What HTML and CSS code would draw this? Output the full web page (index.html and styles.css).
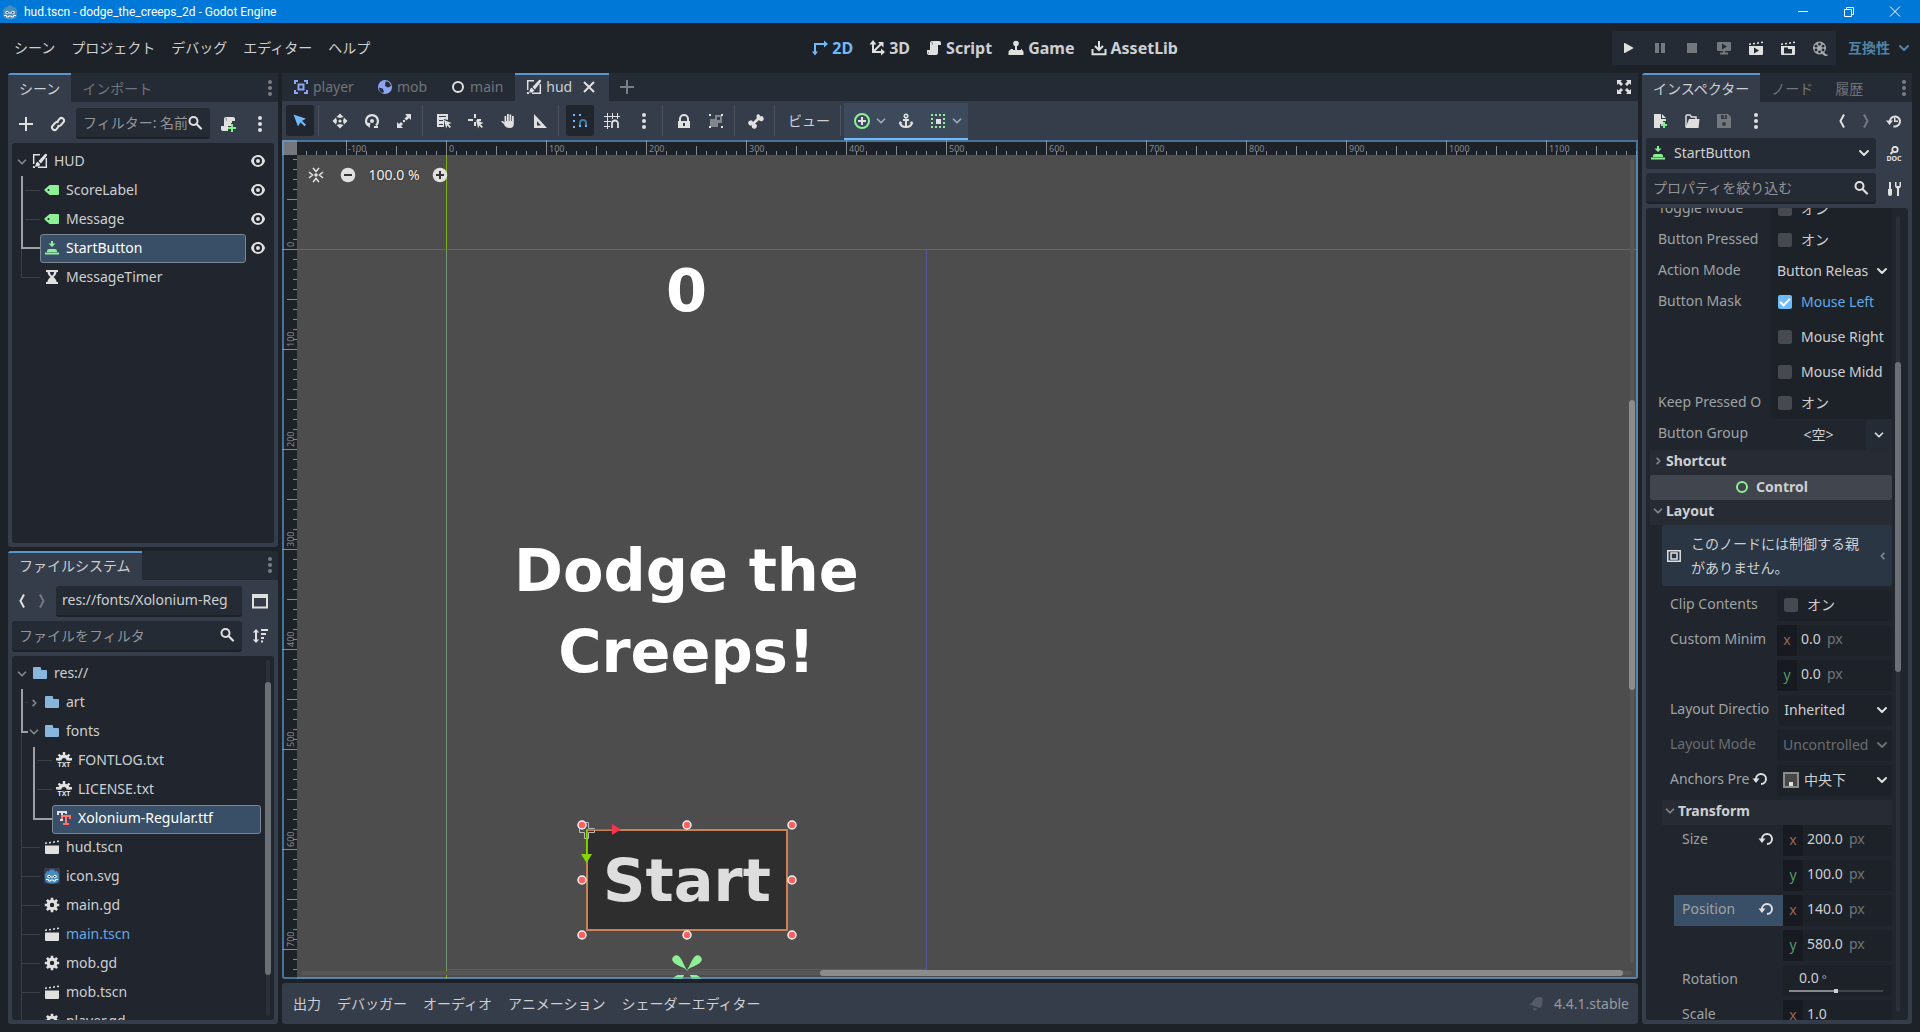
FILE: index.html
```
<!DOCTYPE html>
<html lang="ja">
<head>
    <meta charset="utf-8">
    <title>hud.tscn - dodge_the_creeps_2d - Godot Engine</title>
    <link rel="stylesheet" href="styles.css">
</head>
<body>

<!-- icon set, all on a 16x16 grid -->
<svg class="sprite" aria-hidden="true">
    <symbol id="godot" viewBox="0 0 16 16"><path fill="#478cbf" d="M2 5l1-2 2 .5L6 1.500h4l1 2 2-.5 1 2 1 1v5c0 3-3 4.500-7 4.500S1 14 1 11V6z"/><circle cx="5" cy="8.500" r="1.700" fill="#fff"/><circle cx="11" cy="8.500" r="1.700" fill="#fff"/><circle cx="5.200" cy="8.600" r=".9" fill="#414042"/><circle cx="10.800" cy="8.600" r=".9" fill="#414042"/><path stroke="#fff" d="M8 8v2M2 11.500h2.500v1.500h2v-1h3v1h2v-1.500H14" fill="none"/></symbol>
    <symbol id="plus" viewBox="0 0 16 16"><path d="M7 1v6H1v2h6v6h2V9h6V7H9V1z"/></symbol>
    <symbol id="link" viewBox="0 0 16 16"><g fill="none" stroke="currentColor" stroke-width="2"><path d="M7 6l2.500-3.200a2.500 2.500 0 0 1 3.700 3.700L10.500 9.500a2.500 2.500 0 0 1-3 0"/><path d="M9 10l-2.500 3.200a2.500 2.500 0 0 1-3.700-3.700L5.500 6.500a2.500 2.500 0 0 1 3 0"/></g></symbol>
    <symbol id="search" viewBox="0 0 16 16"><circle cx="6.500" cy="6" r="4" fill="none" stroke="currentColor" stroke-width="2"/><path stroke="currentColor" stroke-width="2.200" stroke-linecap="round" d="M9.500 9l4.500 4.500"/></symbol>
    <symbol id="script" viewBox="0 0 16 16"><path d="M6 1c-1.100 0-2 .9-2 2v7H1v3c0 1.100.9 2 2 2h7c1.100 0 2-.9 2-2V5h3V3c0-1.100-.9-2-2-2z"/><path fill="#9a9a9a" d="M5 3a1 1 0 0 1 2 0v2H6V3.500zM2 12h1v2a1 1 0 0 1-1-1z"/></symbol>
    <symbol id="script-add" viewBox="0 0 16 16"><path d="M6 1c-1.100 0-2 .9-2 2v7H1v3c0 1.100.9 2 2 2h5v-5h3V7h1V5h3V3c0-1.100-.9-2-2-2z"/><path fill="#9a9a9a" d="M5 3a1 1 0 0 1 2 0v2H6V3.500z"/><path fill="#7ff289" d="M11 8h2v3h3v2h-3v3h-2v-3H8v-2h3z"/></symbol>
    <symbol id="dots" viewBox="0 0 16 16"><circle cx="8" cy="2" r="2"/><circle cx="8" cy="8" r="2"/><circle cx="8" cy="14" r="2"/></symbol>
    <symbol id="down" viewBox="0 0 16 16"><path fill="none" stroke="currentColor" stroke-width="2" stroke-linecap="round" stroke-linejoin="round" d="M4 6l4 4 4-4"/></symbol>
    <symbol id="right" viewBox="0 0 16 16"><path fill="none" stroke="currentColor" stroke-width="2" stroke-linecap="round" stroke-linejoin="round" d="M7 5l3 3-3 3"/></symbol>
    <symbol id="back" viewBox="0 0 16 16"><path fill="none" stroke="currentColor" stroke-width="2" d="M10 1.500L6.500 8l3.500 6.500"/></symbol>
    <symbol id="forward" viewBox="0 0 16 16"><path fill="none" stroke="currentColor" stroke-width="2" d="M6 1.500L9.500 8 6 14.500"/></symbol>
    <symbol id="layer" viewBox="0 0 16 16"><path fill="none" stroke="currentColor" stroke-width="1.500" d="M8 1.700H1.700V11M14.300 5v9.300H6M1.700 13v1.300H3M13 1.700h1.300"/><path d="M14.500 1c.8.8.5 1.500 0 2.300L9 10.500 6.500 8 12.500 1.500c.7-.7 1.300-1 2-.5zM5.800 8.800l2.400 2.400c-.5 2-2.200 2.600-5.200 2.300C4 12 3.500 9.500 5.800 8.800z"/></symbol>
    <symbol id="label" viewBox="0 0 16 16"><path fill-rule="evenodd" d="M6 3a1 1 0 0 0-.7.300l-4.600 4a1 1 0 0 0 0 1.400l4.600 4a1 1 0 0 0 .7.300h8a1 1 0 0 0 1-1V4a1 1 0 0 0-1-1zM4.500 7a1 1 0 0 1 0 2 1 1 0 0 1 0-2z"/></symbol>
    <symbol id="button" viewBox="0 0 16 16"><path d="M7 1v2.500H4.500L8 7l3.500-3.500H9V1zM5 9a2 2 0 0 0-2 2v1h10v-1a2 2 0 0 0-2-2zM1 12.500v2h14v-2z"/></symbol>
    <symbol id="timer" viewBox="0 0 16 16"><path fill-rule="evenodd" d="M2 1v2h1.500c0 2 1.500 4 3 5-1.500 1-3 3-3 5H2v2h12v-2h-1.500c0-2-1.500-4-3-5 1.500-1 3-3 3-5H14V1zm4 2h4c0 1.500-.7 3-2 3.800C6.700 6 6 4.500 6 3z"/></symbol>
    <symbol id="eye" viewBox="0 0 16 16"><path fill-rule="evenodd" d="M8 2C5.400 2 2.200 3.900 1 7.700a1 1 0 0 0 0 .6C2.200 12.200 5.500 14 8 14s5.800-1.800 7-5.700a1 1 0 0 0 0-.6C13.900 3.900 10.600 2 8 2zm0 2a4 4 0 0 1 0 8 4 4 0 0 1 0-8zm0 2a2 2 0 0 0 0 4 2 2 0 0 0 0-4z"/></symbol>
    <symbol id="folder" viewBox="0 0 16 16"><path d="M2 2a1 1 0 0 0-1 1v10a1 1 0 0 0 1 1h12a1 1 0 0 0 1-1V6a1 1 0 0 0-1-1h-4a1 1 0 0 1-1-1V3a1 1 0 0 0-1-1z"/></symbol>
    <symbol id="clapper" viewBox="0 0 16 16"><path d="M1 6.500V14a1 1 0 0 0 1 1h12a1 1 0 0 0 1-1V6.500zM1 3.500l2-.3v1.500L1 5zM5 3l2-.3v1.500L5 4.500zM9 2.400l2-.3v1.500L9 4zM13 1.800l2-.3V3l-2 .3z"/></symbol>
    <symbol id="gear" viewBox="0 0 16 16"><circle cx="8" cy="8" r="3.800" fill="none" stroke="currentColor" stroke-width="3.200"/><path stroke="currentColor" stroke-width="2.600" d="M8 .8v3M8 12.200v3M.8 8h3M12.200 8h3M2.900 2.900L5 5M11 11l2.100 2.100M2.900 13.100L5 11M11 5l2.100-2.100"/></symbol>
    <symbol id="txt" viewBox="0 0 16 16"><path d="M2 8.500a6 6 0 0 1 12 0h-3.500a2.500 2.500 0 0 0-5 0z"/><path stroke="currentColor" stroke-width="2.400" d="M8 0v4M2.500 2.500L5 5M13.500 2.500L11 5M0 7.300h4M12 7.300h4"/><text x="8" y="15" text-anchor="middle" class="mini">TXT</text></symbol>
    <symbol id="font" viewBox="0 0 16 16"><path d="M1 1v4h2V3h2v6H4v2h3V3h2v1h2V1z"/><path fill="#ff7070" d="M5 5v4h2V7h2v6H7v2h6v-2h-2V7h2v2h2V5z"/></symbol>
    <symbol id="window" viewBox="0 0 16 16"><path fill="none" stroke="currentColor" stroke-width="2" d="M1 2h14v12.500H1z"/><path d="M0 1h16v4H0z"/></symbol>
    <symbol id="sort" viewBox="0 0 16 16"><path d="M4 1L.8 4.500H3v7H.8L4 15l3.200-3.500H5v-7h2.200zM9 1h7v2H9zM9 5h5v2H9zM9 9h3v2H9zM9 12.500h2v2H9z"/></symbol>
    <symbol id="mode2d" viewBox="0 0 16 16"><path fill="none" stroke="currentColor" stroke-width="2" d="M3 12V4h9"/><path d="M12 .5L16 4l-4 3.500zM0 11.500h6L3 15.500z"/></symbol>
    <symbol id="mode3d" viewBox="0 0 16 16"><path fill="none" stroke="currentColor" stroke-width="2" d="M4 3v9h9M4 12l8-8"/><path d="M4 0L.5 4.500h7zM12 8.500v7l4-3.500zM9 2h5.500v5.500z"/></symbol>
    <symbol id="game" viewBox="0 0 16 16"><circle cx="8" cy="3.500" r="2.800"/><path d="M7 5h2v5h4V9h1v1a2 2 0 0 1 1.500 2v3H.5v-3a2 2 0 0 1 2-2V9H5v1h2z"/></symbol>
    <symbol id="asset" viewBox="0 0 16 16"><path fill="none" stroke="currentColor" stroke-width="2" d="M1.500 9v5.200h13V9M8 1v8M4 6l4 4 4-4"/></symbol>
    <symbol id="play" viewBox="0 0 16 16"><path d="M4 12.500a.5.500 0 0 0 .8.400L13 8.400a.5.500 0 0 0 0-.8L4.800 3a.5.500 0 0 0-.8.500z"/></symbol>
    <symbol id="pause" viewBox="0 0 16 16"><path d="M3 3h4v10H3zM9 3h4v10H9z"/></symbol>
    <symbol id="stop" viewBox="0 0 16 16"><path d="M3 3h10v10H3z"/></symbol>
    <symbol id="remote" viewBox="0 0 16 16"><path fill-rule="evenodd" d="M1 3a1 1 0 0 1 1-1h12a1 1 0 0 1 1 1v7a1 1 0 0 1-1 1H2a1 1 0 0 1-1-1zm5 .5v6L11 6.500zM7 11h2v1.500h3v2H4v-2h3z"/></symbol>
    <symbol id="play-scene" viewBox="0 0 16 16"><path fill-rule="evenodd" d="M1 6v8a1 1 0 0 0 1 1h12a1 1 0 0 0 1-1V6zm5 1.500L11 10.500l-5 3zM1 3.500l2-.3v1.500L1 5zM5 3l2-.3v1.500L5 4.500zM9 2.400l2-.3v1.500L9 4zM13 1.800l2-.3V3l-2 .3z"/></symbol>
    <symbol id="play-custom" viewBox="0 0 16 16"><path fill-rule="evenodd" d="M1 6v8a1 1 0 0 0 1 1h12a1 1 0 0 0 1-1V6zm3 1.500h4V9h4v4.500H4zM1 3.500l2-.3v1.500L1 5zM5 3l2-.3v1.500L5 4.500zM9 2.400l2-.3v1.500L9 4zM13 1.800l2-.3V3l-2 .3z"/></symbol>
    <symbol id="movie" viewBox="0 0 16 16"><circle cx="7.500" cy="8" r="6.500"/><path d="M12 12l2 2.500h1.500V16H13l-3-2z"/><g fill="#252b34"><circle cx="7.500" cy="4.200" r="1.400"/><circle cx="7.500" cy="11.800" r="1.400"/><circle cx="4" cy="6.200" r="1.400"/><circle cx="11" cy="6.200" r="1.400"/><circle cx="4" cy="10" r="1.400"/><circle cx="11" cy="10" r="1.400"/></g></symbol>
    <symbol id="area" viewBox="0 0 16 16"><path fill="none" stroke="currentColor" stroke-width="2" d="M2 5V2h3M11 2h3v3M14 11v3h-3M5 14H2v-3M5.500 5.500h5v5h-5z"/></symbol>
    <symbol id="body" viewBox="0 0 16 16"><circle cx="8" cy="8" r="7"/><path fill="#252b34" d="M8.500 2.500c2.500-.5 5 1.500 5.500 4.500l-3 1.500L8 7zM2 8.500l3.500 1 1.500 3-1 1.300C4 14 2 12 2 8.500z"/></symbol>
    <symbol id="ring" viewBox="0 0 16 16"><circle cx="8" cy="8" r="5" fill="none" stroke="currentColor" stroke-width="2"/></symbol>
    <symbol id="close" viewBox="0 0 16 16"><path fill="none" stroke="currentColor" stroke-width="2" d="M3 3l10 10M13 3L3 13"/></symbol>
    <symbol id="expand" viewBox="0 0 16 16"><path d="M1 1h5L4.500 2.500 7 5 5 7 2.500 4.500 1 6zM15 1v5l-1.500-1.500L11 7 9 5l2.500-2.500L10 1zM1 15v-5l1.500 1.500L5 9l2 2-2.500 2.500L6 15zM15 15h-5l1.500-1.500L9 11l2-2 2.500 2.500L15 10z"/></symbol>
    <symbol id="select" viewBox="0 0 16 16"><path d="M1.500 1.500l4.500 12 2.500-4.200 4 4 1.500-1.500-4-4 4-2z"/></symbol>
    <symbol id="move" viewBox="0 0 16 16"><path d="M8 .5L4.500 4 8 5l3.500-1zM8 15.500L4.500 12 8 11l3.500 1zM.5 8L4 4.500 5 8l-1 3.500zM15.500 8L12 4.500 11 8l1 3.500z"/><circle cx="8" cy="8" r="1.600"/></symbol>
    <symbol id="rotate" viewBox="0 0 16 16"><path fill="none" stroke="currentColor" stroke-width="2.200" d="M4 12.500a6 6 0 1 1 8 0"/><path d="M1 9.500l5.500.5-1 5zM10 13h4v2h-4z"/><circle cx="8" cy="8" r="2"/></symbol>
    <symbol id="scale" viewBox="0 0 16 16"><path d="M9 1h6v6l-2-2-2.500 2.500-2-2L11 3zM1 15V9l2 2 2-2 2 2-2 2 2 2z"/><circle cx="8" cy="8" r="1.200"/></symbol>
    <symbol id="list" viewBox="0 0 16 16"><path fill-rule="evenodd" d="M1 1h11v6L8 6v8H1zm2 2v1h7V3zm0 4v1h4V7zm0 4v1h4v-1z"/><path d="M8 7l7.500 3-3 1.200 2.500 2.500-1.300 1.300-2.500-2.500-1 3z"/></symbol>
    <symbol id="pivot" viewBox="0 0 16 16"><path d="M6 1h2v4H6zM6 9h2v4H6zM0 6h5v2H0zM9 6h4v2H9z"/><path d="M8 7l7.500 3-3 1.200 2.500 2.500-1.300 1.300-2.500-2.500-1 3z"/></symbol>
    <symbol id="pan" viewBox="0 0 16 16"><path d="M4.500 3h1.800v5H7V1h1.800v7h.7V1.500h1.800V8h.7V3h1.800v8c0 2.500-1.500 4-4 4-3 0-4.500-1-6-4L1 8.500c1-1 2.500-.5 3.500 1z"/></symbol>
    <symbol id="ruler" viewBox="0 0 16 16"><path fill-rule="evenodd" d="M2 1v14h13zm3 7l4 4.500H5z"/></symbol>
    <symbol id="snap" viewBox="0 0 16 16"><path d="M1 1h2v2H1zM7 1h2v2H7zM1 7h2v2H1zM1 13h2v2H1z"/><path fill="none" stroke="#3f7aa5" stroke-width="2" d="M8 12v-2a3 3 0 0 1 6 0v2"/><path d="M7 12h2v2H7zM13 12h2v2h-2z"/></symbol>
    <symbol id="grid" viewBox="0 0 16 16"><path d="M3 0h1v16H3zM8 0h1v6H8zM13 0h1v6h-1zM0 3h16v1H0zM0 8h7v1H0zM0 13h6v1H0z"/><path fill="none" stroke="currentColor" stroke-width="1.800" d="M8 15v-4.500a3 3 0 0 1 6 0V15"/></symbol>
    <symbol id="lock" viewBox="0 0 16 16"><path fill-rule="evenodd" d="M8 1a5 5 0 0 0-5 5v2H2v7h12V8h-1V6a5 5 0 0 0-5-5zm0 2a3 3 0 0 1 3 3v2H5V6a3 3 0 0 1 3-3zM7 10h2v3H7z"/></symbol>
    <symbol id="group" viewBox="0 0 16 16"><path opacity=".45" fill-rule="evenodd" d="M7 2h7v8h-4v4H2V6h5zm2 2v3h3V4z"/><path d="M1 1h2v2H1zM13 1h2v2h-2zM1 13h2v2H1zM13 13h2v2h-2z"/></symbol>
    <symbol id="bone" viewBox="0 0 16 16"><path d="M10.500 1A2.500 2.500 0 0 0 9 5L5 9a2.500 2.500 0 1 0-.8 3A2.500 2.500 0 1 0 7 10.800L11 7a2.500 2.500 0 1 0 1-3.500A2.500 2.500 0 0 0 10.500 1z"/></symbol>
    <symbol id="control-plus" viewBox="0 0 16 16"><circle cx="8" cy="8" r="7" fill="none" stroke="#8eef97" stroke-width="2"/><path d="M7 4h2v3h3v2H9v3H7V9H4V7h3z"/></symbol>
    <symbol id="anchor" viewBox="0 0 16 16"><path fill="none" stroke="currentColor" stroke-width="2" d="M8 5.500V14M5 7h6M2 9.500C2.500 13 5 14 8 14s5.500-1 6-4.500"/><circle cx="8" cy="3" r="1.700" fill="none" stroke="currentColor" stroke-width="1.600"/><path d="M.5 11l1.500-3 2.500 2zM15.500 11L14 8l-2.500 2z"/></symbol>
    <symbol id="container" viewBox="0 0 16 16"><path fill="none" stroke="#8eef97" stroke-width="2" stroke-dasharray="2 2" d="M1 2h14M1 14h14M2 5v8M14 5v8"/><path d="M6 6h5v5H6z"/></symbol>
    <symbol id="file-new" viewBox="0 0 16 16"><path d="M2 1v14h6v-4h3V8h3V6H9V1zM10 1v4h4z"/><path fill="#7ff289" d="M11 9h2v2h2v2h-2v2h-2v-2H9v-2h2z"/></symbol>
    <symbol id="open" viewBox="0 0 16 16"><path fill="none" stroke="currentColor" stroke-width="1.500" d="M2 14V3a1 1 0 0 1 1-1h3l1.500 2H12v3"/><path d="M5 6h10.500l-1 9H1.500z"/></symbol>
    <symbol id="save" viewBox="0 0 16 16"><path fill-rule="evenodd" d="M1 1h11l3 3v11H1zm4 1v4h6V2H9v3H8V2zm3 7a2 2 0 0 0 0 4 2 2 0 0 0 0-4z"/></symbol>
    <symbol id="history" viewBox="0 0 16 16"><path fill="none" stroke="currentColor" stroke-width="2" d="M4 8.500a5 5 0 1 1 3.500 4.700"/><path d="M0 7.500h7L3.500 12zM8 4.500h1.500v3H12V9H8z"/></symbol>
    <symbol id="doc" viewBox="0 0 16 16"><circle cx="9" cy="3.500" r="2.700" fill="none" stroke="currentColor" stroke-width="1.800"/><path stroke="currentColor" stroke-width="2" d="M7 5.500L4.500 8"/><text x="8" y="15" text-anchor="middle" class="mini">DOC</text></symbol>
    <symbol id="tools" viewBox="0 0 16 16"><path d="M3 1h2v7h1v5a2 2 0 0 1-4 0V8h1zM9 1v4a3 3 0 0 0 2 2.500V15h2V7.500A3 3 0 0 0 15 5V1h-1.500v4h-3V1z"/></symbol>
    <symbol id="revert" viewBox="0 0 16 16"><path fill="none" stroke="currentColor" stroke-width="2" d="M4 8a5 5 0 1 1 5 5"/><path d="M.5 7.500h7L4 12z"/></symbol>
    <symbol id="frame" viewBox="0 0 16 16"><path fill="none" stroke="currentColor" stroke-width="1.500" d="M1.800 2.800h12.400v10.400H1.800zM5 5h6v6H5z"/></symbol>
    <symbol id="center" viewBox="0 0 16 16"><circle cx="8" cy="8" r="1.800"/><path fill="none" stroke="currentColor" stroke-width="1.600" d="M5 1l3 3.500L11 1M5 15l3-3.500 3 3.500M1 5l3.500 3L1 11M15 5l-3.500 3 3.500 3"/></symbol>
    <symbol id="zoom-out" viewBox="0 0 16 16"><circle cx="8" cy="8" r="7.300"/><path fill="#333" d="M4 7h8v2H4z"/></symbol>
    <symbol id="zoom-in" viewBox="0 0 16 16"><circle cx="8" cy="8" r="7.300"/><path fill="#333" d="M7 4h2v3h3v2H9v3H7V9H4V7h3z"/></symbol>
    <symbol id="bell" viewBox="0 0 16 16"><path d="M8.500 1.500C11 .5 13.500 1 14.500 2c0 3 .5 6-2 10L1 8.500C5 8 5 3 8.500 1.500zM5 11.500l4 1.500c-.5 2.500-4 1.500-4-1.500z"/></symbol>
</svg>

<header class="titlebar">
    <svg class="icon"><use href="#godot"/></svg>
    <span class="title">hud.tscn - dodge_the_creeps_2d - Godot Engine</span>
    <button class="winbtn" aria-label="最小化"><svg class="icon"><path stroke="#fff" d="M3 7.500h10"/></svg></button>
    <button class="winbtn" aria-label="元に戻す"><svg class="icon"><path fill="none" stroke="#fff" d="M3.500 5.500h7v7h-7zM5.500 5V3.500h7v7H11"/></svg></button>
    <button class="winbtn" aria-label="閉じる"><svg class="icon"><path stroke="#fff" d="M3 2.500l10 10M13 2.500l-10 10"/></svg></button>
</header>

<nav class="menubar">
    <div class="menus">
        <button>シーン</button>
        <button>プロジェクト</button>
        <button>デバッグ</button>
        <button>エディター</button>
        <button>ヘルプ</button>
    </div>
    <div class="modes">
        <button class="on"><svg class="icon"><use href="#mode2d"/></svg>2D</button>
        <button><svg class="icon"><use href="#mode3d"/></svg>3D</button>
        <button><svg class="icon"><use href="#script"/></svg>Script</button>
        <button><svg class="icon"><use href="#game"/></svg>Game</button>
        <button><svg class="icon"><use href="#asset"/></svg>AssetLib</button>
    </div>
    <div class="run">
        <div class="runbar">
            <button aria-label="実行"><svg class="icon"><use href="#play"/></svg></button>
            <button class="dim" aria-label="一時停止"><svg class="icon"><use href="#pause"/></svg></button>
            <button class="dim" aria-label="停止"><svg class="icon"><use href="#stop"/></svg></button>
            <button class="dim" aria-label="リモート"><svg class="icon"><use href="#remote"/></svg></button>
            <button aria-label="シーンを実行"><svg class="icon"><use href="#play-scene"/></svg></button>
            <button aria-label="指定シーンを実行"><svg class="icon"><use href="#play-custom"/></svg></button>
            <button class="soft" aria-label="ムービー"><svg class="icon"><use href="#movie"/></svg></button>
        </div>
        <div class="renderer">
            <select aria-label="レンダラー"><option>互換性</option></select>
            <svg class="icon"><use href="#down"/></svg>
        </div>
    </div>
</nav>

<main class="workspace">

    <div class="left">
        <section class="dock">
            <div class="tabs">
                <button class="tab active">シーン</button>
                <button class="tab">インポート</button>
                <button class="more" aria-label="メニュー"><svg class="icon"><use href="#dots"/></svg></button>
            </div>
            <div class="dockbody">
                <div class="bar">
                    <button class="tool" aria-label="追加"><svg class="icon"><use href="#plus"/></svg></button>
                    <button class="tool" aria-label="インスタンス化"><svg class="icon"><use href="#link"/></svg></button>
                    <div class="field">
                        <input type="text" placeholder="フィルター: 名前" aria-label="フィルター">
                        <svg class="icon"><use href="#search"/></svg>
                    </div>
                    <button class="tool" aria-label="スクリプト"><svg class="icon"><use href="#script-add"/></svg></button>
                    <button class="tool" aria-label="その他"><svg class="icon"><use href="#dots"/></svg></button>
                </div>
                <div class="tree">
                    <svg class="guides">
                        <path class="thin" d="M9.500 105v29.500H28M13 47.500h15M13 76.500h15"/>
                        <path class="thick" d="M10 33v72h18"/>
                    </svg>
                    <ul>
                        <li><span class="arrow"><svg class="icon"><use href="#down"/></svg></span><span class="item"><svg class="icon"><use href="#layer"/></svg>HUD</span><button class="eye" aria-label="表示"><svg class="icon"><use href="#eye"/></svg></button></li>
                        <li class="l1"><span class="item"><svg class="icon green"><use href="#label"/></svg>ScoreLabel</span><button class="eye" aria-label="表示"><svg class="icon"><use href="#eye"/></svg></button></li>
                        <li class="l1"><span class="item"><svg class="icon green"><use href="#label"/></svg>Message</span><button class="eye" aria-label="表示"><svg class="icon"><use href="#eye"/></svg></button></li>
                        <li class="l1"><span class="item selected"><svg class="icon green"><use href="#button"/></svg>StartButton</span><button class="eye" aria-label="表示"><svg class="icon"><use href="#eye"/></svg></button></li>
                        <li class="l1"><span class="item"><svg class="icon"><use href="#timer"/></svg>MessageTimer</span></li>
                    </ul>
                </div>
            </div>
        </section>

        <section class="dock">
            <div class="tabs">
                <button class="tab active">ファイルシステム</button>
                <button class="more" aria-label="メニュー"><svg class="icon"><use href="#dots"/></svg></button>
            </div>
            <div class="dockbody">
                <div class="bar">
                    <button class="nav" aria-label="戻る"><svg class="icon"><use href="#back"/></svg></button>
                    <button class="nav close-by dim" aria-label="進む"><svg class="icon"><use href="#forward"/></svg></button>
                    <div class="field path"><input type="text" value="res://fonts/Xolonium-Reg" aria-label="パス"></div>
                    <button class="tool" aria-label="分割表示"><svg class="icon"><use href="#window"/></svg></button>
                </div>
                <div class="bar">
                    <div class="field">
                        <input type="text" placeholder="ファイルをフィルタ" aria-label="ファイルをフィルタ">
                        <svg class="icon"><use href="#search"/></svg>
                    </div>
                    <button class="tool" aria-label="並べ替え"><svg class="icon"><use href="#sort"/></svg></button>
                </div>
                <div class="tree files">
                    <svg class="guides">
                        <path class="thin" d="M9.500 76v300M13 46.500h3M25 104.500h15M25 133.500h15M9.500 191.500H28M9.500 220.500H28M9.500 249.500H28M9.500 278.500H28M9.500 307.500H28M9.500 336.500H28"/>
                        <path class="thick" d="M10 33v43h6M22 91v72h18"/>
                    </svg>
                    <ul>
                        <li><span class="arrow"><svg class="icon"><use href="#down"/></svg></span><span class="item"><svg class="icon blue"><use href="#folder"/></svg>res://</span></li>
                        <li class="l1"><span class="arrow"><svg class="icon"><use href="#right"/></svg></span><span class="item"><svg class="icon blue"><use href="#folder"/></svg>art</span></li>
                        <li class="l1"><span class="arrow"><svg class="icon"><use href="#down"/></svg></span><span class="item"><svg class="icon blue"><use href="#folder"/></svg>fonts</span></li>
                        <li class="l2"><span class="item"><svg class="icon"><use href="#txt"/></svg>FONTLOG.txt</span></li>
                        <li class="l2"><span class="item"><svg class="icon"><use href="#txt"/></svg>LICENSE.txt</span></li>
                        <li class="l2"><span class="item selected"><svg class="icon"><use href="#font"/></svg>Xolonium-Regular.ttf</span></li>
                        <li class="l1"><span class="item"><svg class="icon"><use href="#clapper"/></svg>hud.tscn</span></li>
                        <li class="l1"><span class="item"><svg class="icon thumb"><use href="#godot"/></svg>icon.svg</span></li>
                        <li class="l1"><span class="item"><svg class="icon"><use href="#gear"/></svg>main.gd</span></li>
                        <li class="l1"><span class="item opened"><svg class="icon"><use href="#clapper"/></svg>main.tscn</span></li>
                        <li class="l1"><span class="item"><svg class="icon"><use href="#gear"/></svg>mob.gd</span></li>
                        <li class="l1"><span class="item"><svg class="icon"><use href="#clapper"/></svg>mob.tscn</span></li>
                        <li class="l1"><span class="item"><svg class="icon"><use href="#gear"/></svg>player.gd</span></li>
                    </ul>
                    <div class="scroll"><i class="thumb-files"></i></div>
                </div>
            </div>
        </section>
    </div>

    <div class="middle">
        <section class="editor">
            <div class="tabs scenes">
                <button class="tab"><svg class="icon violet"><use href="#area"/></svg>player</button>
                <button class="tab"><svg class="icon violet"><use href="#body"/></svg>mob</button>
                <button class="tab"><svg class="icon"><use href="#ring"/></svg>main</button>
                <button class="tab active"><svg class="icon"><use href="#layer"/></svg>hud<svg class="icon close"><use href="#close"/></svg></button>
                <button class="newtab" aria-label="新しいタブ"><svg class="icon"><use href="#plus"/></svg></button>
                <button class="full" aria-label="集中モード"><svg class="icon"><use href="#expand"/></svg></button>
            </div>
            <div class="toolbar">
                <button class="tool pressed" aria-label="選択"><svg class="icon"><use href="#select"/></svg></button>
                <i class="sep"></i>
                <button class="tool" aria-label="移動"><svg class="icon"><use href="#move"/></svg></button>
                <button class="tool" aria-label="回転"><svg class="icon"><use href="#rotate"/></svg></button>
                <button class="tool" aria-label="スケール"><svg class="icon"><use href="#scale"/></svg></button>
                <i class="sep"></i>
                <button class="tool" aria-label="リスト選択"><svg class="icon"><use href="#list"/></svg></button>
                <button class="tool" aria-label="ピボット"><svg class="icon"><use href="#pivot"/></svg></button>
                <button class="tool" aria-label="パン"><svg class="icon"><use href="#pan"/></svg></button>
                <button class="tool" aria-label="定規"><svg class="icon"><use href="#ruler"/></svg></button>
                <i class="sep"></i>
                <button class="tool pressed" aria-label="スマートスナップ"><svg class="icon"><use href="#snap"/></svg></button>
                <button class="tool" aria-label="グリッドスナップ"><svg class="icon"><use href="#grid"/></svg></button>
                <button class="tool" aria-label="スナップ設定"><svg class="icon"><use href="#dots"/></svg></button>
                <i class="sep"></i>
                <button class="tool" aria-label="ロック"><svg class="icon"><use href="#lock"/></svg></button>
                <button class="tool" aria-label="グループ"><svg class="icon"><use href="#group"/></svg></button>
                <i class="sep"></i>
                <button class="tool" aria-label="ボーン"><svg class="icon"><use href="#bone"/></svg></button>
                <i class="sep"></i>
                <button class="view">ビュー</button>
                <i class="sep"></i>
                <div class="context">
                    <button class="wide" aria-label="アンカープリセット"><svg class="icon"><use href="#control-plus"/></svg><svg class="icon chev"><use href="#down"/></svg></button>
                    <button class="tool" aria-label="アンカー"><svg class="icon"><use href="#anchor"/></svg></button>
                    <button class="wide" aria-label="コンテナサイズ"><svg class="icon"><use href="#container"/></svg><svg class="icon chev"><use href="#down"/></svg></button>
                </div>
            </div>

            <div class="viewport">
                <div class="corner"></div>
                <svg class="ruler-x">
                    <defs>
                        <pattern id="ticks-x" x="149" width="100" height="15" patternUnits="userSpaceOnUse">
                            <path d="M0 0h1v15H0zM50 6h1v9h-1zM10 11h1v4h-1zM20 11h1v4h-1zM30 11h1v4h-1zM40 11h1v4h-1zM60 11h1v4h-1zM70 11h1v4h-1zM80 11h1v4h-1zM90 11h1v4h-1z"/>
                        </pattern>
                    </defs>
                    <rect width="100%" height="15" fill="url(#ticks-x)"/>
                    <text x="51" y="12">-100</text><text x="152" y="12">0</text><text x="252" y="12">100</text><text x="352" y="12">200</text><text x="452" y="12">300</text><text x="552" y="12">400</text><text x="652" y="12">500</text><text x="752" y="12">600</text><text x="852" y="12">700</text><text x="952" y="12">800</text><text x="1052" y="12">900</text><text x="1152" y="12">1000</text><text x="1252" y="12">1100</text>
                </svg>
                <svg class="ruler-y">
                    <defs>
                        <pattern id="ticks-y" y="94" width="15" height="100" patternUnits="userSpaceOnUse">
                            <path d="M0 0v1h15V0zM5 50v1h10v-1zM11 10v1h4v-1zM11 20v1h4v-1zM11 30v1h4v-1zM11 40v1h4v-1zM11 60v1h4v-1zM11 70v1h4v-1zM11 80v1h4v-1zM11 90v1h4v-1z"/>
                        </pattern>
                    </defs>
                    <rect width="15" height="100%" fill="url(#ticks-y)"/>
                    <g transform="rotate(-90)"><text x="-92" y="12">0</text><text x="-192" y="12">100</text><text x="-292" y="12">200</text><text x="-392" y="12">300</text><text x="-492" y="12">400</text><text x="-592" y="12">500</text><text x="-692" y="12">600</text><text x="-792" y="12">700</text></g>
                </svg>
                <div class="canvas">
                    <div class="axis-x"></div>
                    <div class="axis-y"></div>
                    <div class="screen">
                        <div class="score">0</div>
                        <div class="message">Dodge the<br>Creeps!</div>
                        <button class="start">Start</button>
                        <svg class="gizmo">
                            <path fill="none" stroke="#b9b9b9" d="M133.500 579.500h5v-6h4v6h6v4h-6v6h-4v-6h-5z"/>
                            <path fill="#f5334f" d="M142 580h24v-5l9 5.500-9 5.500v-5h-24z"/>
                            <path fill="#87d600" d="M140 581v24h-5l5.500 9 5.500-9h-5v-24z"/>
                            <g class="handles">
                                <circle cx="136" cy="576" r="4"/><circle cx="241" cy="576" r="4"/><circle cx="346" cy="576" r="4"/>
                                <circle cx="136" cy="631" r="4"/><circle cx="346" cy="631" r="4"/>
                                <circle cx="136" cy="686" r="4"/><circle cx="241" cy="686" r="4"/><circle cx="346" cy="686" r="4"/>
                            </g>
                            <g class="anchors">
                                <path d="M241 721c-1-6-4-10-4-15a4 4 0 1 1 8 0c0 5-3 9-4 15z" transform="rotate(-45 241 721)"/>
                                <path d="M241 721c-1-6-4-10-4-15a4 4 0 1 1 8 0c0 5-3 9-4 15z" transform="rotate(45 241 721)"/>
                                <path d="M241 721c-1-6-4-10-4-15a4 4 0 1 1 8 0c0 5-3 9-4 15z" transform="rotate(135 241 721)"/>
                                <path d="M241 721c-1-6-4-10-4-15a4 4 0 1 1 8 0c0 5-3 9-4 15z" transform="rotate(-135 241 721)"/>
                            </g>
                        </svg>
                    </div>
                    <div class="zoom">
                        <button aria-label="中央"><svg class="icon"><use href="#center"/></svg></button>
                        <button aria-label="縮小"><svg class="icon"><use href="#zoom-out"/></svg></button>
                        <button class="percent">100.0 %</button>
                        <button aria-label="拡大"><svg class="icon"><use href="#zoom-in"/></svg></button>
                    </div>
                    <div class="hscroll"><i></i></div>
                    <div class="vscroll"><i></i></div>
                </div>
            </div>
        </section>

        <footer class="bottom">
            <button>出力</button>
            <button>デバッガー</button>
            <button>オーディオ</button>
            <button>アニメーション</button>
            <button>シェーダーエディター</button>
            <span class="version"><svg class="icon"><use href="#bell"/></svg>4.4.1.stable</span>
        </footer>
    </div>

    <section class="dock inspector">
        <div class="tabs">
            <button class="tab active">インスペクター</button>
            <button class="tab">ノード</button>
            <button class="tab">履歴</button>
            <button class="more" aria-label="メニュー"><svg class="icon"><use href="#dots"/></svg></button>
        </div>
        <div class="dockbody">
            <div class="bar icons">
                <button class="tool" aria-label="新規"><svg class="icon"><use href="#file-new"/></svg></button>
                <button class="tool" aria-label="開く"><svg class="icon"><use href="#open"/></svg></button>
                <button class="tool dim" aria-label="保存"><svg class="icon"><use href="#save"/></svg></button>
                <button class="tool" aria-label="その他"><svg class="icon"><use href="#dots"/></svg></button>
                <span class="grow"></span>
                <button class="nav" aria-label="戻る"><svg class="icon"><use href="#back"/></svg></button>
                <button class="nav dim" aria-label="進む"><svg class="icon"><use href="#forward"/></svg></button>
                <button class="tool" aria-label="編集履歴"><svg class="icon"><use href="#history"/></svg></button>
            </div>
            <div class="bar">
                <div class="field object">
                    <svg class="icon green"><use href="#button"/></svg>
                    <select aria-label="オブジェクト"><option>StartButton</option></select>
                    <svg class="icon"><use href="#down"/></svg>
                </div>
                <button class="tool" aria-label="ドキュメント"><svg class="icon"><use href="#doc"/></svg></button>
            </div>
            <div class="bar">
                <div class="field">
                    <input type="text" placeholder="プロパティを絞り込む" aria-label="プロパティを絞り込む">
                    <svg class="icon"><use href="#search"/></svg>
                </div>
                <button class="tool" aria-label="設定"><svg class="icon"><use href="#tools"/></svg></button>
            </div>

            <div class="props">
                <div class="scrolled">
                    <div class="prop"><span class="name">Toggle Mode</span><div class="value"><label class="check"><input type="checkbox">オン</label></div></div>
                    <div class="prop"><span class="name">Button Pressed</span><div class="value"><label class="check"><input type="checkbox">オン</label></div></div>
                    <div class="prop"><label class="name" for="action">Action Mode</label><div class="value pick"><select id="action"><option>Button Releas</option></select><svg class="icon"><use href="#down"/></svg></div></div>
                    <div class="prop"><span class="name">Button Mask</span><div class="value stack">
                        <label class="check on"><input type="checkbox" checked>Mouse Left</label>
                        <label class="check"><input type="checkbox">Mouse Right</label>
                        <label class="check"><input type="checkbox">Mouse Midd</label>
                    </div></div>
                    <div class="prop"><span class="name">Keep Pressed O</span><div class="value"><label class="check"><input type="checkbox">オン</label></div></div>
                    <div class="prop"><span class="name">Button Group</span><div class="resource"><button>&lt;空&gt;</button><button class="drop" aria-label="選択"><svg class="icon"><use href="#down"/></svg></button></div></div>
                    <h3 class="section"><svg class="icon"><use href="#right"/></svg>Shortcut</h3>
                    <h2 class="category"><svg class="icon green"><use href="#ring"/></svg>Control</h2>
                    <h3 class="section"><svg class="icon"><use href="#down"/></svg>Layout</h3>

                    <div class="sub">
                        <div class="note"><svg class="icon"><use href="#frame"/></svg><p>このノードには制御する親がありません。</p><svg class="icon turn"><use href="#right"/></svg></div>
                        <div class="prop"><span class="name">Clip Contents</span><div class="value"><label class="check"><input type="checkbox">オン</label></div></div>
                        <div class="prop"><span class="name">Custom Minim</span><div class="vector">
                            <div class="num"><label class="x" for="cx">x</label><input id="cx" type="text" value="0.0"><span>px</span></div>
                            <div class="num"><label class="y" for="cy">y</label><input id="cy" type="text" value="0.0"><span>px</span></div>
                        </div></div>
                        <div class="prop"><label class="name" for="dir">Layout Directio</label><div class="value pick"><select id="dir"><option>Inherited</option></select><svg class="icon"><use href="#down"/></svg></div></div>
                        <div class="prop off"><label class="name" for="mode">Layout Mode</label><div class="value pick"><select id="mode" disabled><option>Uncontrolled</option></select><svg class="icon"><use href="#down"/></svg></div></div>
                        <div class="prop"><label class="name" for="preset">Anchors Pre<svg class="icon revert"><use href="#revert"/></svg></label><div class="value pick"><i class="preset"></i><select id="preset"><option>中央下</option></select><svg class="icon"><use href="#down"/></svg></div></div>
                        <div>
                            <h3 class="section"><svg class="icon"><use href="#down"/></svg>Transform</h3>
                            <div class="sub">
                                <div class="prop"><span class="name">Size<svg class="icon revert"><use href="#revert"/></svg></span><div class="vector">
                                    <div class="num long"><label class="x" for="sx">x</label><input id="sx" type="text" value="200.0"><span>px</span></div>
                                    <div class="num long"><label class="y" for="sy">y</label><input id="sy" type="text" value="100.0"><span>px</span></div>
                                </div></div>
                                <div class="prop"><span class="name current">Position<svg class="icon revert"><use href="#revert"/></svg></span><div class="vector">
                                    <div class="num long"><label class="x" for="px">x</label><input id="px" type="text" value="140.0"><span>px</span></div>
                                    <div class="num long"><label class="y" for="py">y</label><input id="py" type="text" value="580.0"><span>px</span></div>
                                </div></div>
                                <div class="prop"><label class="name" for="rot">Rotation</label><div class="value angle"><div>0.0<small>°</small></div><input id="rot" type="range" min="-360" max="360" value="0"></div></div>
                                <div class="prop"><span class="name">Scale</span><div class="vector">
                                    <div class="num"><label class="x" for="scx">x</label><input id="scx" type="text" value="1.0"></div>
                                </div></div>
                            </div>
                        </div>
                    </div>
                </div>
                <div class="scroll"><i class="thumb-props"></i></div>
            </div>
        </div>
    </section>
</main>

</body>
</html>
```

FILE: styles.css
```
*{
    box-sizing: border-box;
}

body{
    margin: 0;
    height: 100vh;
    display: flex;
    flex-direction: column;
    overflow: hidden;
    background-color: #1d2229;
    color: #cdcfd2;
    font-family: "Noto Sans", "Noto Sans CJK JP", sans-serif;
    font-size: 14px;
    line-height: 20px;
}

button, input, select{
    font: inherit;
    color: inherit;
    background: none;
    border: 0;
    margin: 0;
    padding: 0;
    appearance: none;
    outline: none;
    white-space: nowrap;
}

button{
    display: flex;
    align-items: center;
    justify-content: center;
}

select:disabled{
    opacity: 1;
}

ul, h2, h3, p{
    margin: 0;
    padding: 0;
    list-style: none;
    font-size: 14px;
}

.sprite{
    display: none;
}

.icon{
    width: 16px;
    height: 16px;
    flex: none;
    color: #e0e0e0;
    fill: currentColor;
}

.mini{
    font: bold 7px "Noto Sans", sans-serif;
}

.green{ color: #8eef97; }
.blue{ color: #88b6dd; }
.violet{ color: #8da5f3; }
.dim .icon{ color: #75787d; }
.soft .icon{ color: #a8aaad; }
.grow{ flex: 1; }

/* title bar */
.titlebar{
    display: flex;
    align-items: center;
    height: 23px;
    padding: 0 2px;
    background-color: #0078d7;
    color: #fff;
    font-family: Roboto, sans-serif;
    font-size: 12px;
}

.title{
    flex: 1;
    padding-left: 6px;
}

.winbtn{
    width: 46px;
    height: 20px;
}

/* menu bar */
.menubar{
    display: flex;
    justify-content: space-between;
    align-items: center;
    height: 50px;
    padding: 0 8px 0 6px;
}

.menus, .modes, .run, .runbar{
    display: flex;
    align-items: center;
}

.menus button, .modes button{
    padding: 0 8px;
}

.modes button{
    gap: 4px;
    font-size: 16px;
    font-weight: bold;
}

.modes .on, .modes .on .icon{
    color: #70bafa;
}

.runbar{
    height: 34px;
    border-radius: 3px;
    background-color: #252b34;
}

.runbar button{
    width: 32px;
}

.renderer{
    display: flex;
    align-items: center;
    gap: 6px;
    padding-left: 12px;
    font-weight: bold;
    color: #4f85ab;
}

.renderer .icon{
    color: #4f85ab;
}

/* overall columns */
.workspace{
    flex: 1;
    min-height: 0;
    display: flex;
    gap: 4px;
    padding: 0 8px 8px;
}

.left{
    width: 270px;
    display: flex;
    flex-direction: column;
    gap: 4px;
}

.middle{
    flex: 1;
    min-width: 0;
    display: flex;
    flex-direction: column;
    gap: 4px;
}

.dock{
    flex: 1;
    min-height: 0;
    display: flex;
    flex-direction: column;
    border-radius: 3px;
    overflow: hidden;
    background-color: #363d4a;
}

.inspector{
    flex: none;
    width: 270px;
}

.tabs{
    display: flex;
    height: 29px;
    flex: none;
    background-color: #252b34;
}

.tab{
    padding: 2px 11px 0;
    color: #70747b;
}

.tab.active{
    padding-top: 0;
    border-top: 2px solid #5a96cb;
    background-color: #363d4a;
    color: #cdcfd2;
}

.more{
    width: 16px;
    margin-left: auto;
}

.more .icon{
    color: #7b7e84;
}

.dockbody{
    flex: 1;
    min-height: 0;
    display: flex;
    flex-direction: column;
    gap: 4px;
    padding: 6px 4px 4px;
}

.bar{
    display: flex;
    gap: 4px;
    height: 31px;
    flex: none;
}

.bar.icons{
    height: 26px;
}

.tool{
    width: 28px;
    flex: none;
    border-radius: 3px;
}

.nav{
    width: 20px;
    flex: none;
}

.close-by{
    margin-left: -4px;
}

.field{
    flex: 1;
    min-width: 0;
    display: flex;
    align-items: center;
    gap: 4px;
    padding: 0 7px;
    border-radius: 3px;
    border-bottom: 2px solid #1d2229;
    background-color: #252b34;
}

.field input, .field select{
    flex: 1;
    min-width: 0;
    height: 28px;
}

.field:not(.path) input{
    margin-right: -4px;
}

.field input::placeholder{
    color: #919499;
}

.path{
    padding: 0 6px 2px;
}

.object{
    gap: 8px;
    padding: 0 4px 2px;
    border-bottom: 0;
}

/* trees */
.tree{
    position: relative;
    flex: 1;
    min-height: 0;
    overflow: hidden;
    padding: 4px;
    border-radius: 3px;
    background-color: #21262e;
}

.tree.files{
    padding-right: 13px;
}

.tree ul{
    position: relative;
}

.guides{
    position: absolute;
    left: 0;
    top: 0;
    width: 100%;
    height: 100%;
    fill: none;
}

.thin{ stroke: #3b4048; }
.thick{ stroke: #9da0a4; stroke-width: 2; }

.tree li{
    display: flex;
    height: 29px;
    padding-left: 12px;
}

.tree .l1{ padding-left: 24px; }
.tree .l2{ padding-left: 36px; }

.arrow{
    display: flex;
    align-items: center;
    justify-content: center;
    width: 12px;
    margin-left: -12px;
}

.arrow .icon, .section .icon{
    color: #83868b;
    width: 14px;
}

.item{
    flex: 1;
    display: flex;
    align-items: center;
    gap: 6px;
    padding: 0 3px 2px;
    border: 1px solid transparent;
    border-radius: 3px;
}

.item.selected{
    border-color: #7a8791;
    background-color: #384f67;
    color: #fff;
}

.item.opened{
    color: #63a8e6;
}

.thumb{
    background-color: #363d52;
    border-radius: 2px;
}

.eye{
    width: 24px;
    padding-bottom: 1px;
}

.tree li:last-child .item:only-child{
    margin-right: 24px;
}

.scroll{
    position: absolute;
    top: 4px;
    bottom: 4px;
    right: 4px;
    width: 4px;
    border-radius: 2px;
    background-color: #2c3139;
}

.scroll i{
    position: absolute;
    left: -1px;
    width: 6px;
    border-radius: 3px;
    background-color: #6b6f76;
}

.thumb-files{
    top: 22px;
    height: 293px;
}

.thumb-props{
    top: 146px;
    height: 310px;
}

/* scene editor */
.editor{
    flex: 1;
    min-height: 0;
    display: flex;
    flex-direction: column;
    border-radius: 3px;
    overflow: hidden;
    background-color: #363d4a;
}

.scenes{
    height: 28px;
}

.scenes .tab{
    gap: 4px;
    padding: 0 12px 0 11px;
}

.scenes .tab.active{
    padding-bottom: 2px;
}

.scenes .close{
    margin-left: 5px;
}

.newtab{
    width: 36px;
}

.newtab .icon{
    color: #7b7e84;
}

.full{
    width: 28px;
    margin-left: auto;
}

.toolbar{
    display: flex;
    gap: 4px;
    height: 39px;
    padding: 4px;
}

.pressed{
    background-color: #21262e;
}

.pressed .icon{
    color: #70bafa;
}

.sep{
    width: 4px;
    border-left: 1px solid #4c525e;
}

.view{
    padding: 0 6px;
}

.context{
    display: flex;
    gap: 4px;
    margin: -2px 0 -4px -4px;
    padding: 0 4px;
    border-bottom: 2px solid #70bafa;
    background-color: #3c4a5c;
}

.wide{
    gap: 4px;
    width: 40px;
    justify-content: flex-end;
}

.chev{
    width: 14px;
    color: #a3a8b0;
}

.viewport{
    position: relative;
    flex: 1;
    min-height: 0;
    display: grid;
    grid-template-columns: 15px 1fr;
    grid-template-rows: 15px 1fr;
}

.viewport::after{
    content: "";
    position: absolute;
    inset: 0;
    border: 2px solid rgba(98, 160, 215, 0.65);
    pointer-events: none;
}

.corner{
    background-color: #74787e;
}

.ruler-x, .ruler-y{
    width: 100%;
    height: 100%;
    background-color: #1d2229;
    fill: #85888c;
    font-size: 9px;
}

.canvas{
    position: relative;
    overflow: hidden;
    background-color: #4d4d4d;
}

.axis-x{
    position: absolute;
    top: 94px;
    width: 100%;
    height: 1px;
    background-color: #c43b55;
}

.axis-y{
    position: absolute;
    left: 149px;
    width: 1px;
    height: 100%;
    background-color: #7fae17;
}

.screen{
    position: absolute;
    left: 149px;
    top: 94px;
    width: 481px;
    height: 721px;
    border: 1px solid #56569a;
    border-top-color: #97478c;
    border-left-color: #76957a;
    color: #fff;
    font-family: "DejaVu Sans", sans-serif;
    font-size: 59px;
    font-weight: bold;
    line-height: 81px;
    text-align: center;
}

.score{
    height: 80px;
}

.message{
    margin-top: 200px;
}

.start{
    position: absolute;
    left: 139px;
    top: 579px;
    width: 202px;
    height: 102px;
    border: 2px solid #cc8058;
    background-color: #2e2e2e;
    color: #dedede;
}

.gizmo{
    position: absolute;
    left: -1px;
    top: -1px;
    width: 481px;
    height: 740px;
    overflow: visible;
}

.handles{
    fill: #ff5f5f;
    stroke: #f2f2f2;
    stroke-width: 1.5px;
}

.anchors{
    fill: #8eef97;
}

.zoom{
    position: absolute;
    left: 3px;
    top: 4px;
    display: flex;
    align-items: center;
    height: 32px;
    color: #f0f0f0;
}

.zoom button{
    width: 32px;
}

.zoom .percent{
    width: 60px;
    text-shadow: 0 0 2px #222;
}

.hscroll, .vscroll{
    position: absolute;
    border-radius: 2px;
    background-color: #575757;
}

.hscroll{
    left: 4px;
    right: 6px;
    bottom: 4px;
    height: 4px;
}

.vscroll{
    top: 4px;
    bottom: 16px;
    right: 4px;
    width: 4px;
}

.hscroll i, .vscroll i{
    position: absolute;
    border-radius: 3px;
    background-color: #8b8b8b;
}

.hscroll i{
    top: -1px;
    height: 6px;
    left: 39%;
    right: 9px;
}

.vscroll i{
    left: -1px;
    width: 6px;
    top: 30%;
    height: 36%;
}

.bottom{
    display: flex;
    align-items: center;
    height: 41px;
    padding: 0 9px 0 3px;
    border-radius: 3px;
    background-color: #363d4a;
}

.bottom button{
    padding: 0 8px;
}

.version{
    display: flex;
    align-items: center;
    gap: 10px;
    margin-left: auto;
    color: #959a9f;
}

.version .icon{
    color: #545b67;
}

/* inspector */
.props{
    position: relative;
    flex: 1;
    min-height: 0;
    overflow: hidden;
    padding: 0 16px 0 4px;
    border-radius: 3px;
    background-color: #21262e;
}

.props .scroll{
    top: 8px;
    bottom: 8px;
    right: 8px;
}

/* list is scrolled part way down its first row */
.scrolled{
    margin-top: -14px;
}

.prop{
    display: grid;
    grid-template-columns: 1fr 1fr;
}

.name{
    display: flex;
    align-items: center;
    justify-content: space-between;
    height: 31px;
    padding: 0 9px 4px 8px;
    color: #9fa2a5;
    white-space: nowrap;
}

.name.current{
    background-color: #384f67;
}

.value{
    min-width: 0;
    height: 31px;
    border-radius: 2px;
    background-color: #1d2229;
}

.stack{
    height: auto;
    display: grid;
    gap: 4px;
}

.check{
    display: flex;
    align-items: center;
    gap: 9px;
    height: 31px;
    padding: 0 0 2px 7px;
    white-space: nowrap;
}

.check input{
    width: 14px;
    height: 14px;
    flex: none;
    border-radius: 2px;
    background-color: #46494f;
}

.check input:checked{
    display: grid;
    place-items: center;
    background-color: #70bafa;
}

.check input:checked::after{
    content: "";
    width: 4px;
    height: 8px;
    margin-top: -2px;
    border: solid #fff;
    border-width: 0 2px 2px 0;
    transform: rotate(45deg);
}

.check.on{
    color: #63a8e6;
}

.pick{
    display: flex;
    align-items: center;
    padding: 0 2px 2px 6px;
}

.pick select{
    flex: 1;
    min-width: 0;
}

.off .name, .off select, .off .icon{
    color: #696c71;
}

.preset{
    display: flex;
    align-items: flex-end;
    justify-content: center;
    width: 16px;
    height: 16px;
    margin-right: 5px;
    border: 2px solid #8c8c8c;
    background-color: #474747;
}

.preset::after{
    content: "";
    width: 4px;
    height: 4px;
    background-color: #e0e0e0;
}

.resource{
    display: flex;
}

.resource button{
    flex: 1;
}

.resource .drop{
    flex: none;
    width: 26px;
    background-color: #252b34;
}

.drop .icon{
    width: 14px;
}

.section{
    display: flex;
    align-items: center;
    gap: 1px;
    height: 25px;
    padding: 0 0 4px 1px;
    background-color: #272b34;
}

.category{
    display: flex;
    align-items: center;
    justify-content: center;
    gap: 6px;
    height: 25px;
    padding-bottom: 2px;
    border-radius: 2px;
    background-color: #41454d;
}

.sub{
    display: grid;
    gap: 4px;
    margin-left: 12px;
}

.note{
    display: flex;
    align-items: center;
    gap: 9px;
    height: 61px;
    padding: 0 2px 0 4px;
    border-radius: 2px;
    background-color: #2a3644;
    line-height: 24px;
}

.note p{
    flex: 1;
}

.turn{
    width: 14px;
    transform: rotate(180deg);
    color: #83868b;
}

.vector{
    display: grid;
    gap: 4px;
}

.num{
    display: flex;
    align-items: center;
    height: 31px;
    border-radius: 2px;
    background-color: #1d2229;
    color: #70747a;
}

.num label{
    width: 20px;
    height: 31px;
    line-height: 29px;
    text-align: center;
    border-radius: 2px;
    background-color: #171a20;
}

.num .x{ color: #986655; }
.num .y{ color: #55966c; }

.num input{
    width: 26px;
    margin-left: 4px;
    color: #cdcfd2;
}

.num input, .num span{
    padding-bottom: 3px;
}

.num.long input{
    width: 42px;
}

.angle{
    padding: 3px 9px 0 6px;
}

.angle div{
    padding-left: 10px;
}

.angle small{
    margin-left: 3px;
    color: #9fa2a5;
}

.angle input{
    display: block;
    width: 100%;
    height: 4px;
    background: linear-gradient(to right, #85888c 50%, #41454b 50%) center / 100% 2px no-repeat;
}

.angle input::-webkit-slider-thumb{
    appearance: none;
    width: 4px;
    height: 4px;
    background-color: #cdcfd2;
}
```
